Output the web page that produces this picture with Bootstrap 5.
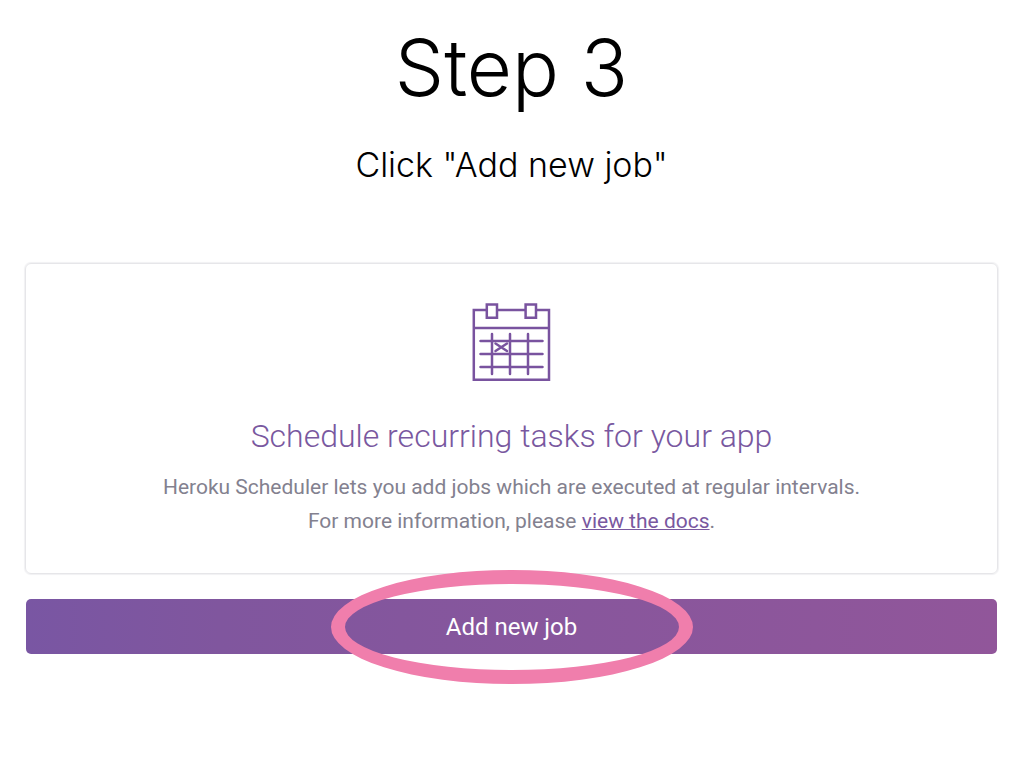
<!DOCTYPE html>
<html lang="en">
<head>
<meta charset="utf-8">
<meta name="viewport" content="width=device-width, initial-scale=1">
<title>Step 3</title>
<link href="https://cdn.jsdelivr.net/npm/bootstrap@5.3.0/dist/css/bootstrap.min.css" rel="stylesheet">
<style>
body { font-family: Roboto, "Liberation Sans", sans-serif; color: #000; }
.slide { padding: 20px 26px 32px 25px; }
.step-title { font-family: Inter, "Liberation Sans", sans-serif; font-size: 78px; font-weight: 300; line-height: 96px; }
.step-text { font-family: Inter, "Liberation Sans", sans-serif; font-size: 34px; font-weight: 300; line-height: 44px; margin: 27px 0 76px; }
.panel { border: 1px solid #e6e6e9; border-radius: 6px; box-shadow: 0 0 1px 1px #f1f1f3; padding: 38px 16px 35px; }
.panel-title { color: #79589f; font-size: 32px; font-weight: 300; line-height: 40px; margin: 34px 0 14px; }
.panel-text { color: #83818f; font-size: 21px; line-height: 34px; }
.panel-text a { color: #79589f; text-decoration-thickness: 1px; }
.btn-job { --bs-btn-color: #fff; --bs-btn-hover-color: #fff; font-size: 24px; line-height: 32px; padding: 12px 12px 11px; border: 0; border-radius: 5px; background: linear-gradient(90deg, #7956a3, #80569e 20%, #91569a); }
.job-row { margin: 25px 1px 0; }
.highlight { width: 362px; height: 114px; border: 14px solid #f07eac; border-radius: 50%; pointer-events: none; }
</style>
</head>
<body>
<main class="slide container-fluid text-center">
  <h1 class="step-title mb-0">Step 3</h1>
  <p class="step-text">Click "Add new job"</p>
  <section class="panel">
    <svg class="d-block mx-auto" width="80" height="80" viewBox="0 0 80 80" fill="none" stroke="#79539f" stroke-width="2.5" aria-hidden="true">
      <path d="M14.8 8H1.8v69.7H77V8H64M25 8h29M1.8 26H77"/>
      <path d="M14.8 2.4H25v13.3H14.8zM53.6 2.4h10.4v13.3H53.6z"/>
      <path stroke-linecap="round" d="M8.500 39H70.500M8.500 52H70.500M8.500 65H70.500M20 32v40M38 32v40M56 32v40"/>
      <path stroke-linecap="round" d="M23.500 41.500l11.500 7.500M35 41.500l-11.500 7.500"/>
    </svg>
    <h2 class="panel-title">Schedule recurring tasks for your app</h2>
    <p class="panel-text mb-0">Heroku Scheduler lets you add jobs which are executed at regular intervals.<br>For more information, please <a href="#">view the docs</a>.</p>
  </section>
  <div class="job-row position-relative">
    <button type="button" class="btn btn-job d-block w-100">Add new job</button>
    <div class="highlight position-absolute top-50 start-50 translate-middle"></div>
  </div>
</main>
<script src="https://cdn.jsdelivr.net/npm/bootstrap@5.3.0/dist/js/bootstrap.bundle.min.js"></script>
</body>
</html>
